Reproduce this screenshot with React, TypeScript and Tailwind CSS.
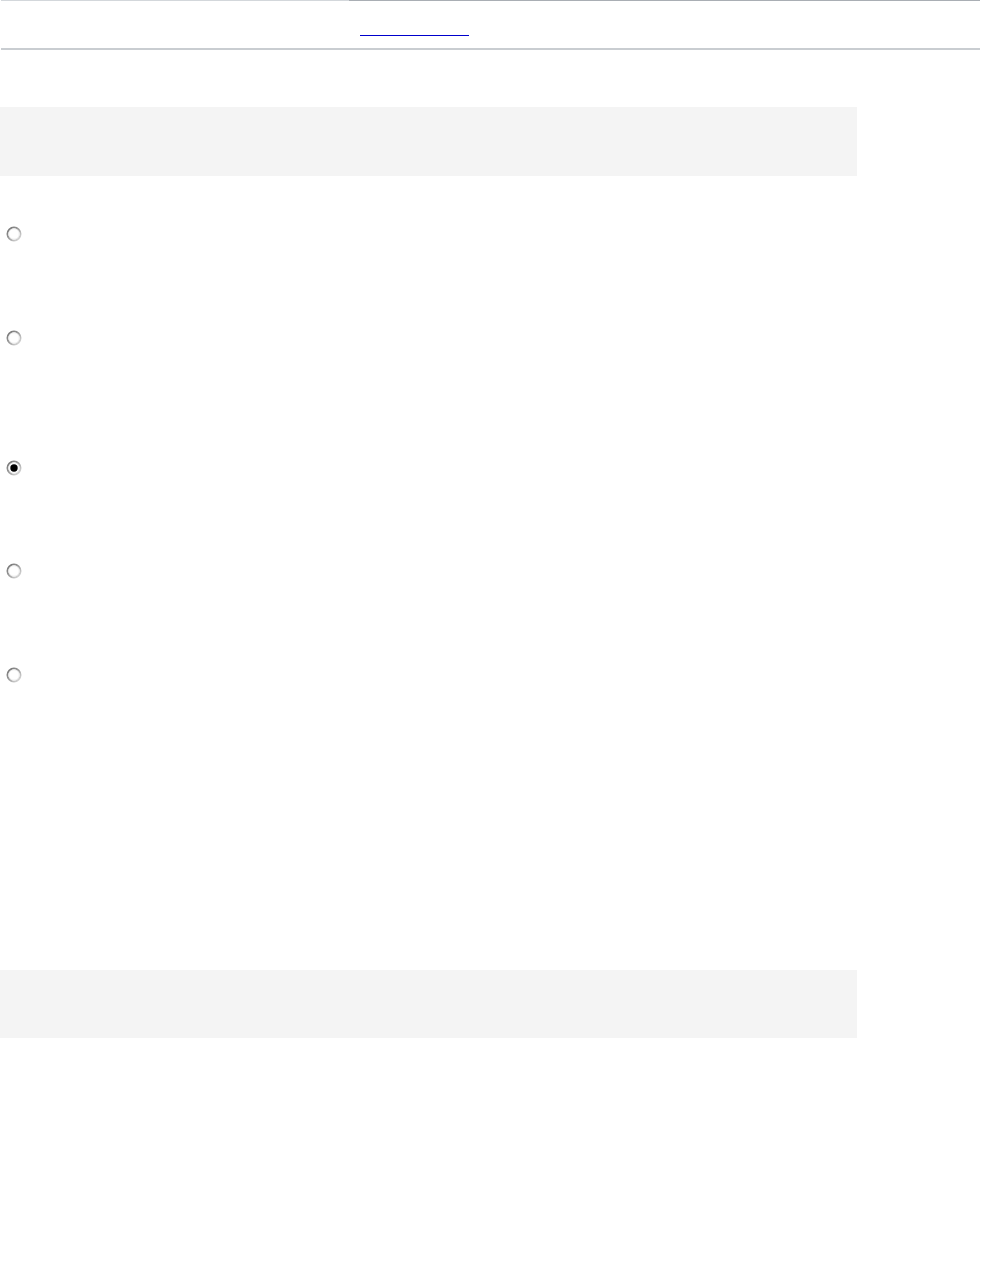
import React from "react";

const Radio = ({ checked = false }: { checked?: boolean }) => (
    <svg width="16" height="16" viewBox="0 0 16 16" className="block">
        <defs>
            <linearGradient id={checked ? "rg-on" : "rg-off"} x1="0" y1="0" x2="1" y2="1">
                <stop offset="0" stopColor="#6e6e6e" />
                <stop offset="0.5" stopColor="#a0a0a0" />
                <stop offset="1" stopColor="#e4e4e4" />
            </linearGradient>
        </defs>
        <circle cx="8" cy="8" r="6.6" fill="#ffffff" stroke={`url(#${checked ? "rg-on" : "rg-off"})`} strokeWidth="1.8" />
        <circle cx="8" cy="8" r="5.2" fill="none" stroke="#ededed" strokeWidth="0.9" />
        {checked && <circle cx="8" cy="8" r="3.7" fill="#000000" />}
    </svg>
);

const radios = [
    { mt: "mt-[50px]", checked: false },
    { mt: "mt-[88px]", checked: false },
    { mt: "mt-[114px]", checked: true },
    { mt: "mt-[87px]", checked: false },
    { mt: "mt-[88px]", checked: false },
];

const App = () => {
    return (
        <div className="w-[981px] h-[1287px] bg-white overflow-hidden" style={{ fontFamily: "'Liberation Sans', Arial, sans-serif" }}>
            <div className="flex h-px ml-px w-[979px]">
                <div className="w-[348px] bg-[#d3d7db]" />
                <div className="flex-1 bg-[#a9aeb4]" />
            </div>
            <div className="h-[47px] pt-[34px] pl-[360px]">
                <div className="w-[109px] h-px bg-[#0000cc]" />
            </div>
            <div className="h-[2px] ml-px w-[979px] bg-[#c9cdd1]" />

            <div className="mt-[57px] h-[69px] w-[857px] bg-[#f4f4f4]" />

            <div className="flex flex-col pl-[6px]">
                {radios.map((r, i) => (
                    <div key={i} className={r.mt}>
                        <Radio checked={r.checked} />
                    </div>
                ))}
            </div>

            <div className="mt-[287px] h-[68px] w-[857px] bg-[#f4f4f4]" />
        </div>
    );
};

export default App;
